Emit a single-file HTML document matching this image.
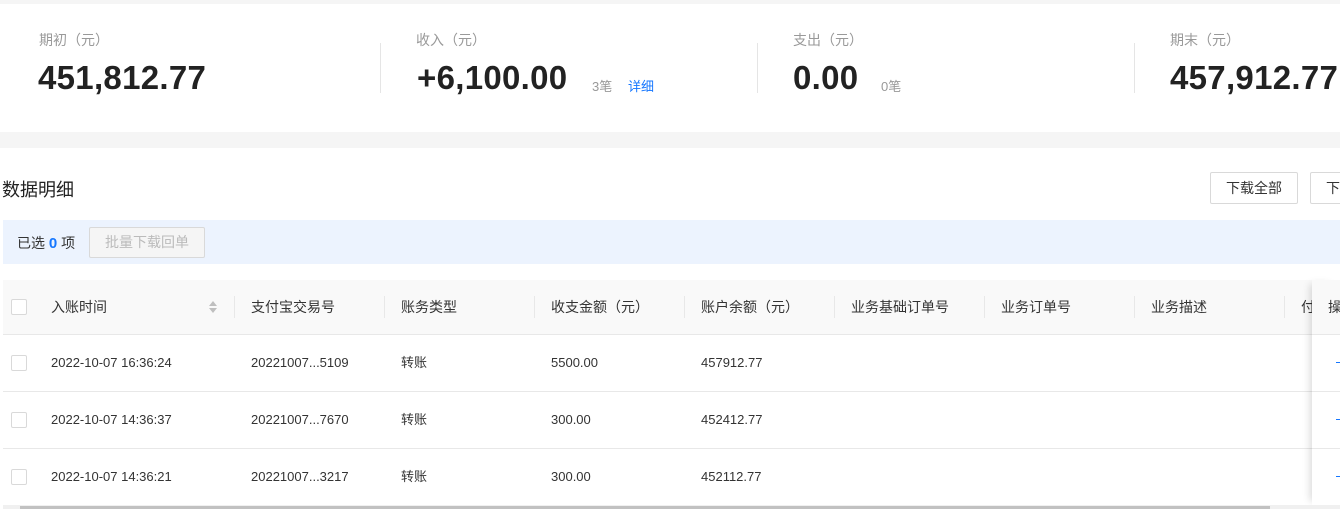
<!DOCTYPE html>
<html><head><meta charset="utf-8"><style>
*{margin:0;padding:0;box-sizing:border-box}
body{width:1340px;height:509px;overflow:hidden;background:#f5f5f5;font-family:"Liberation Sans","Noto Sans CJK SC",sans-serif;color:#333;position:relative}
.a{position:absolute}
.card{left:0;top:4px;width:1340px;height:128px;background:#fff}
.lab{font-size:14px;color:#999;top:30px}
.num{font-size:33px;font-weight:bold;color:#222;top:59px;line-height:38px;letter-spacing:0.3px}
.sm{font-size:13px;color:#999;top:76px}
.vl{width:1px;height:50px;background:#e5e5e5;top:43px}
.main{left:0;top:148px;width:1340px;height:361px;background:#fff}
.btn{border:1px solid #d9d9d9;border-radius:2px;background:#fff;font-size:14px;color:#333;text-align:center;line-height:30px;height:32px}
.th{font-size:14px;color:#333;top:297px;line-height:20px}
.td{font-size:13px;color:#333;line-height:18px}
.cb{width:16px;height:16px;border:1px solid #d9d9d9;border-radius:2px;background:#fff;left:11px}
.sep{width:1px;height:22px;background:#e8e8e8;top:296px}
.hl{left:3px;width:1309px;height:1px;background:#e8e8e8}
</style></head><body>
<div class="a card"></div>
<div class="a lab" style="left:39px">期初（元）</div>
<div class="a num" style="left:38px">451,812.77</div>
<div class="a vl" style="left:380px"></div>
<div class="a lab" style="left:416px">收入（元）</div>
<div class="a num" style="left:417px">+6,100.00</div>
<div class="a sm" style="left:592px">3笔</div>
<div class="a sm" style="left:628px;color:#1677ff">详细</div>
<div class="a vl" style="left:757px"></div>
<div class="a lab" style="left:793px">支出（元）</div>
<div class="a num" style="left:793px">0.00</div>
<div class="a sm" style="left:881px">0笔</div>
<div class="a vl" style="left:1134px"></div>
<div class="a lab" style="left:1170px">期末（元）</div>
<div class="a num" style="left:1170px">457,912.77</div>

<div class="a main"></div>
<div class="a" style="left:2px;top:176px;font-size:18px;color:#222">数据明细</div>
<div class="a btn" style="left:1210px;top:172px;width:88px">下载全部</div>
<div class="a btn" style="left:1310px;top:172px;width:60px;text-align:left;padding-left:15px">下载</div>
<div class="a" style="left:3px;top:220px;width:1337px;height:44px;background:#ecf3fe"></div>
<div class="a" style="left:17px;top:233px;font-size:14px;color:#333">已选 <b style="color:#1677ff;font-size:15px">0</b> 项</div>
<div class="a btn" style="left:89px;top:227px;width:116px;background:#f5f5f5;color:#bbb;line-height:29px;height:31px">批量下载回单</div>

<div class="a" style="left:3px;top:280px;width:1337px;height:54px;background:#f9f9f9"></div>
<div class="a hl" style="top:334px"></div>
<div class="a hl" style="top:391px"></div>
<div class="a hl" style="top:448px"></div>
<div class="a cb" style="top:299px"></div>
<div class="a th" style="left:51px">入账时间</div>
<svg class="a" style="left:208px;top:300px" width="10" height="14"><path d="M5 1L9 6H1Z M5 13L9 8H1Z" fill="#bfbfbf"/></svg>
<div class="a sep" style="left:234px"></div>
<div class="a th" style="left:251px">支付宝交易号</div>
<div class="a sep" style="left:384px"></div>
<div class="a th" style="left:401px">账务类型</div>
<div class="a sep" style="left:534px"></div>
<div class="a th" style="left:551px">收支金额（元）</div>
<div class="a sep" style="left:684px"></div>
<div class="a th" style="left:701px">账户余额（元）</div>
<div class="a sep" style="left:834px"></div>
<div class="a th" style="left:851px">业务基础订单号</div>
<div class="a sep" style="left:984px"></div>
<div class="a th" style="left:1001px">业务订单号</div>
<div class="a sep" style="left:1134px"></div>
<div class="a th" style="left:1151px">业务描述</div>
<div class="a sep" style="left:1284px"></div>
<div class="a th" style="left:1301px">付</div>

<div class="a cb" style="top:355px"></div>
<div class="a td" style="left:51px;top:354px">2022-10-07 16:36:24</div>
<div class="a td" style="left:251px;top:354px">20221007...5109</div>
<div class="a td" style="left:401px;top:354px">转账</div>
<div class="a td" style="left:551px;top:354px">5500.00</div>
<div class="a td" style="left:701px;top:354px">457912.77</div>
<div class="a cb" style="top:412px"></div>
<div class="a td" style="left:51px;top:411px">2022-10-07 14:36:37</div>
<div class="a td" style="left:251px;top:411px">20221007...7670</div>
<div class="a td" style="left:401px;top:411px">转账</div>
<div class="a td" style="left:551px;top:411px">300.00</div>
<div class="a td" style="left:701px;top:411px">452412.77</div>
<div class="a cb" style="top:469px"></div>
<div class="a td" style="left:51px;top:468px">2022-10-07 14:36:21</div>
<div class="a td" style="left:251px;top:468px">20221007...3217</div>
<div class="a td" style="left:401px;top:468px">转账</div>
<div class="a td" style="left:551px;top:468px">300.00</div>
<div class="a td" style="left:701px;top:468px">452112.77</div>

<div class="a" style="left:1312px;top:280px;width:28px;height:225px;background:#fff;box-shadow:-6px 0 8px -4px rgba(0,0,0,.15)"></div>
<div class="a" style="left:1312px;top:280px;width:28px;height:54px;background:#f9f9f9"></div>
<div class="a hl" style="left:1312px;width:28px;top:334px"></div>
<div class="a hl" style="left:1312px;width:28px;top:391px"></div>
<div class="a hl" style="left:1312px;width:28px;top:448px"></div>
<div class="a th" style="left:1328px">操</div>
<div class="a" style="left:1336px;top:362px;width:4px;height:1px;background:#1677ff"></div>
<div class="a" style="left:1336px;top:419px;width:4px;height:1px;background:#1677ff"></div>
<div class="a" style="left:1336px;top:476px;width:4px;height:1px;background:#1677ff"></div>
<div class="a" style="left:3px;top:505px;width:1337px;height:4px;background:#f0f0f0"></div>
<div class="a" style="left:20px;top:506px;width:1250px;height:3px;background:#c1c1c1"></div>
</body></html>
